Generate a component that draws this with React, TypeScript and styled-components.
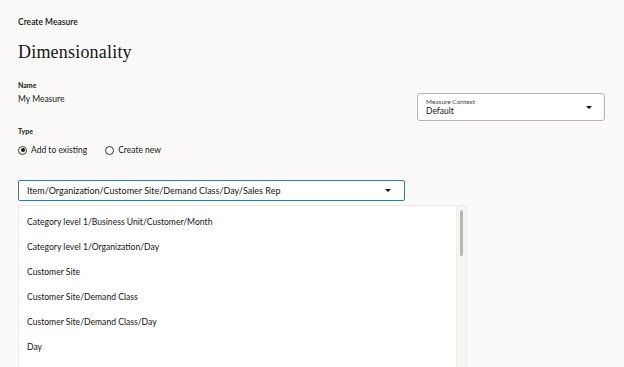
import React from "react";
import styled, { createGlobalStyle } from "styled-components";

const Global = createGlobalStyle`
  html, body { margin: 0; padding: 0; }
  body {
    background: #fbfaf8;
    font-family: Lato, "Noto Sans", sans-serif;
    color: #161513;
    overflow: hidden;
  }
`;

const Page = styled.div`
  width: 624px;
  height: 367px;
  padding: 16px 0 0 18px;
  box-sizing: border-box;
  display: flex;
  flex-direction: column;
  overflow: hidden;
`;

const Crumb = styled.div`
  font-size: 8.5px;
  font-weight: 600;
  line-height: 12px;
`;

const Title = styled.h1`
  margin: 12px 0 0;
  font-family: "Liberation Serif", "DejaVu Serif", serif;
  font-weight: 400;
  font-size: 18px;
  line-height: 24px;
  letter-spacing: 0.2px;
`;

const FormRow = styled.div`
  display: flex;
  margin-top: 16px;
`;

const LeftCol = styled.div`
  width: 399px;
  display: flex;
  flex-direction: column;
`;

const FieldLabel = styled.div`
  font-size: 7px;
  font-weight: 700;
  line-height: 10px;
`;

const FieldValue = styled.div`
  font-size: 8.5px;
  line-height: 12px;
  margin-top: 3px;
`;

const TypeLabel = styled(FieldLabel)`
  margin-top: 21px;
`;

const RadioRow = styled.div`
  display: flex;
  gap: 18px;
  margin-top: 8px;
`;

const RadioItem = styled.label`
  display: flex;
  align-items: center;
  gap: 4px;
  font-size: 8.5px;
  line-height: 12px;
`;

const RadioCircle = styled.span<{ $checked?: boolean }>`
  width: 7px;
  height: 7px;
  border-radius: 50%;
  border: 1px solid #3a3631;
  display: flex;
  align-items: center;
  justify-content: center;
  background: #fff;
  &::after {
    content: "";
    width: 4px;
    height: 4px;
    border-radius: 50%;
    background: ${(p) => (p.$checked ? "#161513" : "transparent")};
  }
`;

const ContextBox = styled.div`
  margin-top: 13px;
  width: 188px;
  height: 28px;
  box-sizing: border-box;
  border: 1px solid #b8b5b1;
  border-radius: 3px;
  background: #fff;
  display: flex;
  align-items: center;
  padding: 0 12px 0 8px;
`;

const ContextText = styled.div`
  flex: 1;
  display: flex;
  flex-direction: column;
`;

const ContextLabel = styled.div`
  font-size: 6.5px;
  line-height: 8px;
  color: #4a4743;
`;

const ContextValue = styled.div`
  font-size: 8.5px;
  line-height: 10px;
`;

const Caret = styled.span`
  width: 0;
  height: 0;
  border-left: 3px solid transparent;
  border-right: 3px solid transparent;
  border-top: 3px solid #161513;
`;

const Select = styled.div`
  margin-top: 24px;
  width: 387px;
  height: 21px;
  box-sizing: border-box;
  border: 1px solid #3f7990;
  border-radius: 2px;
  background: #fff;
  display: flex;
  align-items: center;
  padding: 0 13px 0 8px;
  font-size: 9px;
`;

const SelectText = styled.span`
  flex: 1;
`;

const ListPanel = styled.div`
  margin-top: 4px;
  width: 449px;
  flex: 1;
  box-sizing: border-box;
  background: #fff;
  border: 1px solid #ebe9e6;
  border-bottom: none;
  border-radius: 3px 3px 0 0;
  display: flex;
`;

const Options = styled.ul`
  list-style: none;
  margin: 0;
  padding: 10px 0 0 8px;
  flex: 1;
`;

const Option = styled.li`
  font-size: 8.6px;
  line-height: 12px;
  height: 25px;
`;

const ScrollTrack = styled.div`
  width: 9px;
  background: #f6f5f3;
  border-left: 1px solid #f0eeec;
  padding-top: 4px;
  display: flex;
  justify-content: center;
`;

const ScrollThumb = styled.div`
  width: 3px;
  height: 46px;
  border-radius: 2px;
  background: #b9b7b4;
`;

const options = [
  "Category level 1/Business Unit/Customer/Month",
  "Category level 1/Organization/Day",
  "Customer Site",
  "Customer Site/Demand Class",
  "Customer Site/Demand Class/Day",
  "Day",
];

export default function App() {
  return (
    <>
      <Global />
      <Page>
        <Crumb>Create Measure</Crumb>
        <Title>Dimensionality</Title>
        <FormRow>
          <LeftCol>
            <FieldLabel>Name</FieldLabel>
            <FieldValue>My Measure</FieldValue>
            <TypeLabel>Type</TypeLabel>
            <RadioRow>
              <RadioItem>
                <RadioCircle $checked />
                Add to existing
              </RadioItem>
              <RadioItem>
                <RadioCircle />
                Create new
              </RadioItem>
            </RadioRow>
          </LeftCol>
          <ContextBox>
            <ContextText>
              <ContextLabel>Measure Context</ContextLabel>
              <ContextValue>Default</ContextValue>
            </ContextText>
            <Caret />
          </ContextBox>
        </FormRow>
        <Select>
          <SelectText>Item/Organization/Customer Site/Demand Class/Day/Sales Rep</SelectText>
          <Caret />
        </Select>
        <ListPanel>
          <Options>
            {options.map((o) => (
              <Option key={o}>{o}</Option>
            ))}
          </Options>
          <ScrollTrack>
            <ScrollThumb />
          </ScrollTrack>
        </ListPanel>
      </Page>
    </>
  );
}
